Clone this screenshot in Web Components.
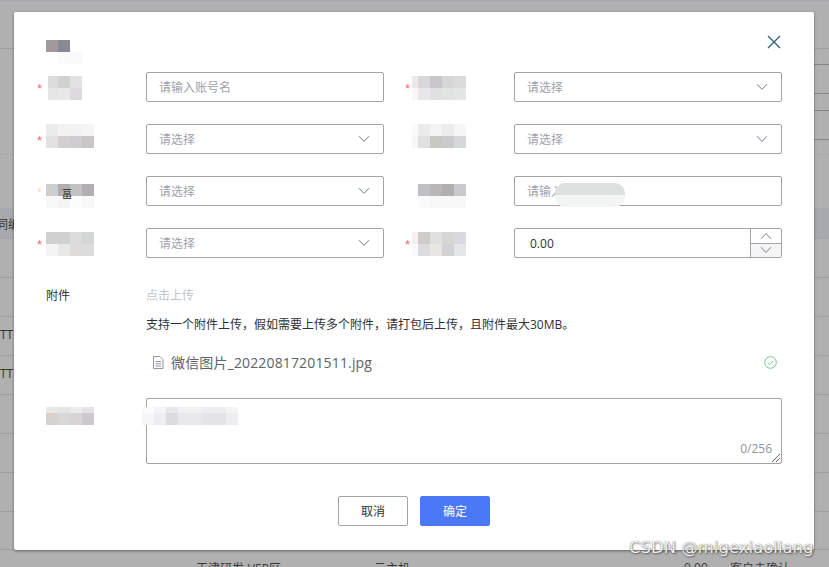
<!DOCTYPE html>
<html lang="zh">
<head>
<meta charset="utf-8">
<title>Dialog</title>
<style>
    html, body { margin: 0; height: 100%; }
    body {
        width: 829px;
        height: 567px;
        overflow: hidden;
        font-family: "Open Sans", "Noto Sans CJK SC", sans-serif;
    }
</style>
</head>
<body>
<page-backdrop>
    <form-dialog>
        <dialog-head slot="head">
            <blur-patch cols="3" cell="12" colors="#a09b9a,#888a92,#fff,#fff,#fbfbfb,#fafafa"></blur-patch>
        </dialog-head>

        <form-row star2>
            <blur-patch slot="label" style="margin:4px 0 0 2px" lead="10" cols="3" cell="12" colors="#dcdcdc,#d2d2d2,#e2e2e2,#e6e6e6,#e8e8e8,#dcdadc"></blur-patch>
            <text-field placeholder="请输入账号名"></text-field>
            <blur-patch slot="label2" style="margin-top:4px" lead="6" cols="5" cell="12" colors="#eee8e8,#d8d8da,#c8c6c8,#d6d6d6,#dadcdc,#f8f6f4,#e8e6e8,#e0e2e2,#e2e4e4,#e4e6e6"></blur-patch>
            <select-field slot="field2" placeholder="请选择"></select-field>
        </form-row>

        <form-row>
            <blur-patch slot="label" cols="4" cell="12" colors="#ececec,#f2f2f2,#f1f3f3,#f5f5f5,#e2e2e0,#d2d0d0,#cfcdcf,#c8c6c6"></blur-patch>
            <select-field placeholder="请选择"></select-field>
            <blur-patch slot="label2" lead="6" cols="5" cell="12" colors="#fafafa,#ebebeb,#f2f4f4,#ececec,#f6f6f6,#f6f6f6,#e0e0e0,#c8c8c4,#cbcbcd,#d4d8d8"></blur-patch>
            <select-field slot="field2" placeholder="请选择"></select-field>
        </form-row>

        <form-row pale>
            <blur-patch slot="label" style="margin-top:8px" cols="4" cell="12" glyph="畐" colors="#cfcfcf,#b0aeae,#c2c2c0,#b0aeb0,#f8f8f8,#f4f4f4,#fcfcfc,#f8f8f8"></blur-patch>
            <select-field placeholder="请选择"></select-field>
            <blur-patch slot="label2" style="margin-top:8px" lead="6" cols="5" cell="12" colors="#fff,#c0c0c4,#b8b6b6,#b0aeae,#c8cacc,#fff,#fafafa,#f8f8f8,#f8f8f8,#f8f8f8"></blur-patch>
            <text-field slot="field2" placeholder="请输入" smudge></text-field>
        </form-row>

        <form-row star2>
            <blur-patch slot="label" style="margin-top:4px" cols="4" cell="12" colors="#d0d0d0,#d0d0d0,#dcdcdc,#d4d6d6,#f4f4f4,#e8e8e6,#dedcda,#dcdcdc"></blur-patch>
            <select-field placeholder="请选择"></select-field>
            <blur-patch slot="label2" style="margin-top:4px" lead="6" cols="5" cell="12" colors="#f6f0f0,#cfcdcc,#dfe1e1,#d8d6d4,#d8dadf,#fafafa,#dcdcde,#e8e6e2,#d0d2d4,#e4e6e8"></blur-patch>
            <number-field slot="field2" value="0.00"></number-field>
        </form-row>

        <upload-block filename="微信图片_20220817201511.jpg"
            hint="支持一个附件上传，假如需要上传多个附件，请打包后上传，且附件最大30MB。"></upload-block>

        <remark-block></remark-block>

        <dialog-actions></dialog-actions>
    </form-dialog>
</page-backdrop>

<template id="tpl-row">
    <style>
        :host { display: grid; grid-template-columns: 109px 238px 130px 268px; height: 30px; margin-bottom: 22px; }
        .label { display: flex; align-items: flex-start; position: relative; padding-left: 9px; }
        .label.right { padding-left: 28px; }
        .star { position: absolute; left: 0; top: 9px; color: #f56c6c; font: 13px "Liberation Sans", sans-serif; }
        .right .star { left: 21px; }
        :host([pale]) .left .star { color: #fbd5d5; }
        :host(:not([star2])) .right .star { display: none; }
    </style>
    <div class="label left"><span class="star">*</span><slot name="label"></slot></div>
    <slot></slot>
    <div class="label right"><span class="star">*</span><slot name="label2"></slot></div>
    <slot name="field2"></slot>
</template>

<script>
// Small helper so each element can set up its shadow root the same way
function shadow(el, html) {
    el.attachShadow({ mode: 'open' }).innerHTML = html;
}

const FONT = '"Open Sans", "Noto Sans CJK SC", sans-serif';
const CHEVRON = `<svg width="12" height="8" viewBox="0 0 12 8"><path d="M1 1.2 6 6.4 11 1.2" fill="none" stroke="#6f7f92" stroke-width="1"/></svg>`;

class PageBackdrop extends HTMLElement {
    connectedCallback() {
        // table rows of the page behind the dialog: [bottom y, kind]
        const rows = [
            [2, 'top'], [49, ''], [65, 'dark'], [94, 'dark'], [111, 'dark'], [140, 'dark'],
            [155, 'dash'], [208, 'none'], [239, 'band'], [278, ''], [317, ''], [356, ''],
            [395, ''], [434, ''], [473, ''], [512, ''], [550, '']
        ];
        let prev = 0;
        const lines = rows.map(([y, kind]) => {
            const html = `<i class="${kind}" style="height:${y - prev}px"></i>`;
            prev = y;
            return html;
        }).join('');
        shadow(this, `
        <style>
            :host { display: block; position: relative; width: 829px; height: 567px; background: #b0b0b0; overflow: hidden; }
            .lines i { display: block; box-sizing: border-box; border-bottom: 1px solid #a0a0a0; }
            .lines .top { background: #a8a8ae; border: 0; }
            .lines .none { border: 0; }
            .lines .band { background: #a8a9ae; border-bottom-color: #a4a5aa; }
            .lines .dash { border-bottom: 1px dashed #a2a2a2; }
            .lines .dark { position: relative; border: 0; }
            .lines .dark::after { content: ""; position: absolute; left: 814px; right: 0; bottom: 0; height: 1px; background: #858585; }
            .under { position: absolute; top: 559px; font: 12px ${FONT}; color: #3a3a3a; white-space: nowrap; }
            .side { position: absolute; left: 0; font: 12px ${FONT}; color: #333; white-space: nowrap; }
            .mark {
                position: absolute; left: 629px; top: 538px;
                font: 16.5px "DejaVu Sans", sans-serif; color: #efefef;
                text-shadow: 0 0 1px rgba(0,0,0,.5), 1px 1px 2px rgba(0,0,0,.45); white-space: nowrap;
            }
        </style>
        <div class="lines">${lines}</div>
        <span class="side" style="top:215px;left:-4px">同编</span>
        <span class="side" style="top:326px">TT</span>
        <span class="side" style="top:365px">TT</span>
        <span class="under" style="left:196px">天津研发-VEP区</span>
        <span class="under" style="left:374px">云主机</span>
        <span class="under" style="left:684px">0.00</span>
        <span class="under" style="left:730px">客户未确认</span>
        <slot></slot>
        <span class="mark">CSDN @migexiaoliang</span>`);
    }
}

class FormDialog extends HTMLElement {
    connectedCallback() {
        shadow(this, `
        <style>
            :host {
                display: block; position: absolute; left: 14px; top: 12px; width: 800px; height: 538px;
                box-sizing: border-box; padding: 0 32px 0 23px;
                background: #fff; border-radius: 2px; box-shadow: 0 1px 3px rgba(0,0,0,.45);
                font-family: ${FONT}; color: #303133;
            }
        </style>
        <slot name="head"></slot>
        <slot></slot>`);
    }
}

class DialogHead extends HTMLElement {
    connectedCallback() {
        shadow(this, `
        <style>
            :host { display: flex; justify-content: space-between; align-items: flex-start; height: 60px; padding-top: 28px; box-sizing: border-box; margin-left: 9px; }
            svg { margin: -5px 1px 0 0; }
        </style>
        <slot></slot>
        <svg width="14" height="14" viewBox="0 0 14 14"><path d="M1 1 13 13M13 1 1 13" stroke="#2b5a80" stroke-width="1.2" fill="none"/></svg>`);
    }
}

// Square pixels standing in for the blurred-out labels of the screenshot
class BlurPatch extends HTMLElement {
    connectedCallback() {
        const cols = Number(this.getAttribute('cols'));
        const cell = this.getAttribute('cell');
        const lead = this.getAttribute('lead');
        const rowh = this.getAttribute('rowh');
        const glyph = this.getAttribute('glyph');
        const cells = this.getAttribute('colors').split(',').map(c => `<i style="background:${c}"></i>`).join('');
        const columns = lead ? `${lead}px repeat(${cols - 1}, ${cell}px)` : `repeat(${cols}, ${cell}px)`;
        shadow(this, `
        <style>
            :host {
                display: inline-grid; position: relative; align-self: flex-start;
                grid-template-columns: ${columns};
                grid-auto-rows: ${cell}px;
                ${rowh ? `grid-template-rows: ${rowh};` : ''}
            }
            b { position: absolute; left: 16px; top: 2px; font: 10px "Noto Sans CJK SC", sans-serif; color: #222; }
        </style>${cells}${glyph ? `<b>${glyph}</b>` : ''}`);
    }
}

class FormRow extends HTMLElement {
    connectedCallback() {
        const root = this.attachShadow({ mode: 'open' });
        root.appendChild(document.querySelector('#tpl-row').content.cloneNode(true));
    }
}

const FIELD_CSS = `
    :host { display: block; width: 238px; height: 30px; }
    :host([slot=field2]) { width: 268px; }
    .box {
        display: flex; align-items: center; justify-content: space-between;
        box-sizing: border-box; height: 30px; padding: 0 13px 0 12px; position: relative;
        border: 1px solid #a4a4a4; border-radius: 2px; background: #fff;
        font: 12px ${FONT}; color: #9ea2a9;
    }
`;

class TextField extends HTMLElement {
    connectedCallback() {
        const smudge = this.hasAttribute('smudge') ? `<i class="sm"></i>` : '';
        shadow(this, `
        <style>${FIELD_CSS}
            .sm { position: absolute; left: 40px; top: 6px; width: 70px; height: 24px; border-radius: 10px;
                  background: linear-gradient(#dfe0e0 0 50%, #f3f4f4 50%); }
        </style>
        <div class="box"><span>${this.getAttribute('placeholder')}</span>${smudge}</div>`);
    }
}

class SelectField extends HTMLElement {
    connectedCallback() {
        shadow(this, `
        <style>${FIELD_CSS}</style>
        <div class="box"><span>${this.getAttribute('placeholder')}</span>${CHEVRON}</div>`);
    }
}

class NumberField extends HTMLElement {
    connectedCallback() {
        shadow(this, `
        <style>${FIELD_CSS}
            .box { padding: 0 0 0 15px; color: #303133; }
            .steps { display: flex; flex-direction: column; width: 30px; height: 28px; border-left: 1px solid #a4a4a4; }
            .steps div { flex: 1; display: flex; align-items: center; justify-content: center; }
            .steps div + div { border-top: 1px solid #a4a4a4; background: #f5f5f5; }
            .steps div:first-child svg { transform: rotate(180deg); }
        </style>
        <div class="box"><span>${this.getAttribute('value')}</span>
            <div class="steps"><div>${CHEVRON}</div><div>${CHEVRON}</div></div>
        </div>`);
    }
}

class UploadBlock extends HTMLElement {
    connectedCallback() {
        shadow(this, `
        <style>
            :host { display: grid; grid-template-columns: 109px 1fr; font: 12px ${FONT}; color: #303133; }
            .label { padding: 6px 0 0 9px; }
            .link { padding-top: 6px; color: #c0c4cc; height: 22px; }
            .hint { margin-top: 8px; height: 18px; line-height: 18px; white-space: nowrap; }
            .file { display: flex; align-items: center; height: 22px; margin-top: 17px; font-size: 14px; letter-spacing: .15px; color: #606266; padding-left: 6px; }
            .file svg:first-child { margin-right: 7px; }
            .file span { flex: 1; }
            .ok { margin-right: 5px; }
        </style>
        <div class="label">附件</div>
        <div>
            <div class="link">点击上传</div>
            <div class="hint">${this.getAttribute('hint')}</div>
            <div class="file">
                <svg width="12" height="13" viewBox="0 0 12 13" fill="none" stroke="#8d97a8"><path d="M1.5.5H8L11 3.5V12.5H1.5ZM3.5 5.5H9M3.5 7.8H9M3.5 10H9"/></svg>
                <span>${this.getAttribute('filename')}</span>
                <svg class="ok" width="13" height="13" viewBox="0 0 13 13" fill="none" stroke="#6cc98a"><circle cx="6.5" cy="6.5" r="5.8"/><path d="M3.6 6.6 5.7 8.6 9.4 4.8"/></svg>
            </div>
        </div>`);
    }
}

class RemarkBlock extends HTMLElement {
    connectedCallback() {
        shadow(this, `
        <style>
            :host { display: grid; grid-template-columns: 109px 636px; margin-top: 25px; }
            .label { display: flex; padding: 9px 0 0 9px; }
            .area { position: relative; box-sizing: border-box; height: 66px; border: 1px solid #a4a4a4; border-radius: 2px; }
            .count { position: absolute; right: 9px; bottom: 6px; font: 12px ${FONT}; color: #909399; }
            svg { position: absolute; right: 0; bottom: 0; }
            .sm { position: absolute; left: -5px; top: 8px; }
        </style>
        <div class="label"><blur-patch cols="4" cell="12" rowh="6px 12px" colors="#e8e8e8,#e4e4e4,#ececec,#e4e2e4,#d6d2d0,#d8d8d6,#d6d4d4,#ccc8cc"></blur-patch></div>
        <div class="area">
            <blur-patch class="sm" cols="8" cell="12" rowh="6px 12px" colors="#fafafa,#f4f4f6,#e8e8ec,#f2f2f2,#f2f2f2,#eeeef0,#eeeef0,#f4f4f4,#f6f6f6,#eeeef0,#dcdce0,#e8e8ea,#e8e8ea,#e4e4e8,#e2e4e8,#eeeef0"></blur-patch>
            <span class="count">0/256</span>
            <svg width="10" height="10" viewBox="0 0 10 10" stroke="#666"><path d="M1 9 9 1M5 9 9 5"/></svg>
        </div>`);
    }
}

class DialogActions extends HTMLElement {
    connectedCallback() {
        shadow(this, `
        <style>
            :host { display: flex; justify-content: center; gap: 12px; margin-top: 32px; padding-left: 9px; }
            button { width: 70px; height: 30px; border-radius: 2px; font: 12px ${FONT}; padding: 0; }
            .plain { background: #fff; border: 1px solid #a4a4a4; color: #303133; }
            .primary { background: #4a78f6; border: 1px solid #4a78f6; color: #fff; }
        </style>
        <button class="plain">取消</button><button class="primary">确定</button>`);
    }
}

customElements.define('page-backdrop', PageBackdrop);
customElements.define('form-dialog', FormDialog);
customElements.define('dialog-head', DialogHead);
customElements.define('blur-patch', BlurPatch);
customElements.define('form-row', FormRow);
customElements.define('text-field', TextField);
customElements.define('select-field', SelectField);
customElements.define('number-field', NumberField);
customElements.define('upload-block', UploadBlock);
customElements.define('remark-block', RemarkBlock);
customElements.define('dialog-actions', DialogActions);
</script>
</body>
</html>
